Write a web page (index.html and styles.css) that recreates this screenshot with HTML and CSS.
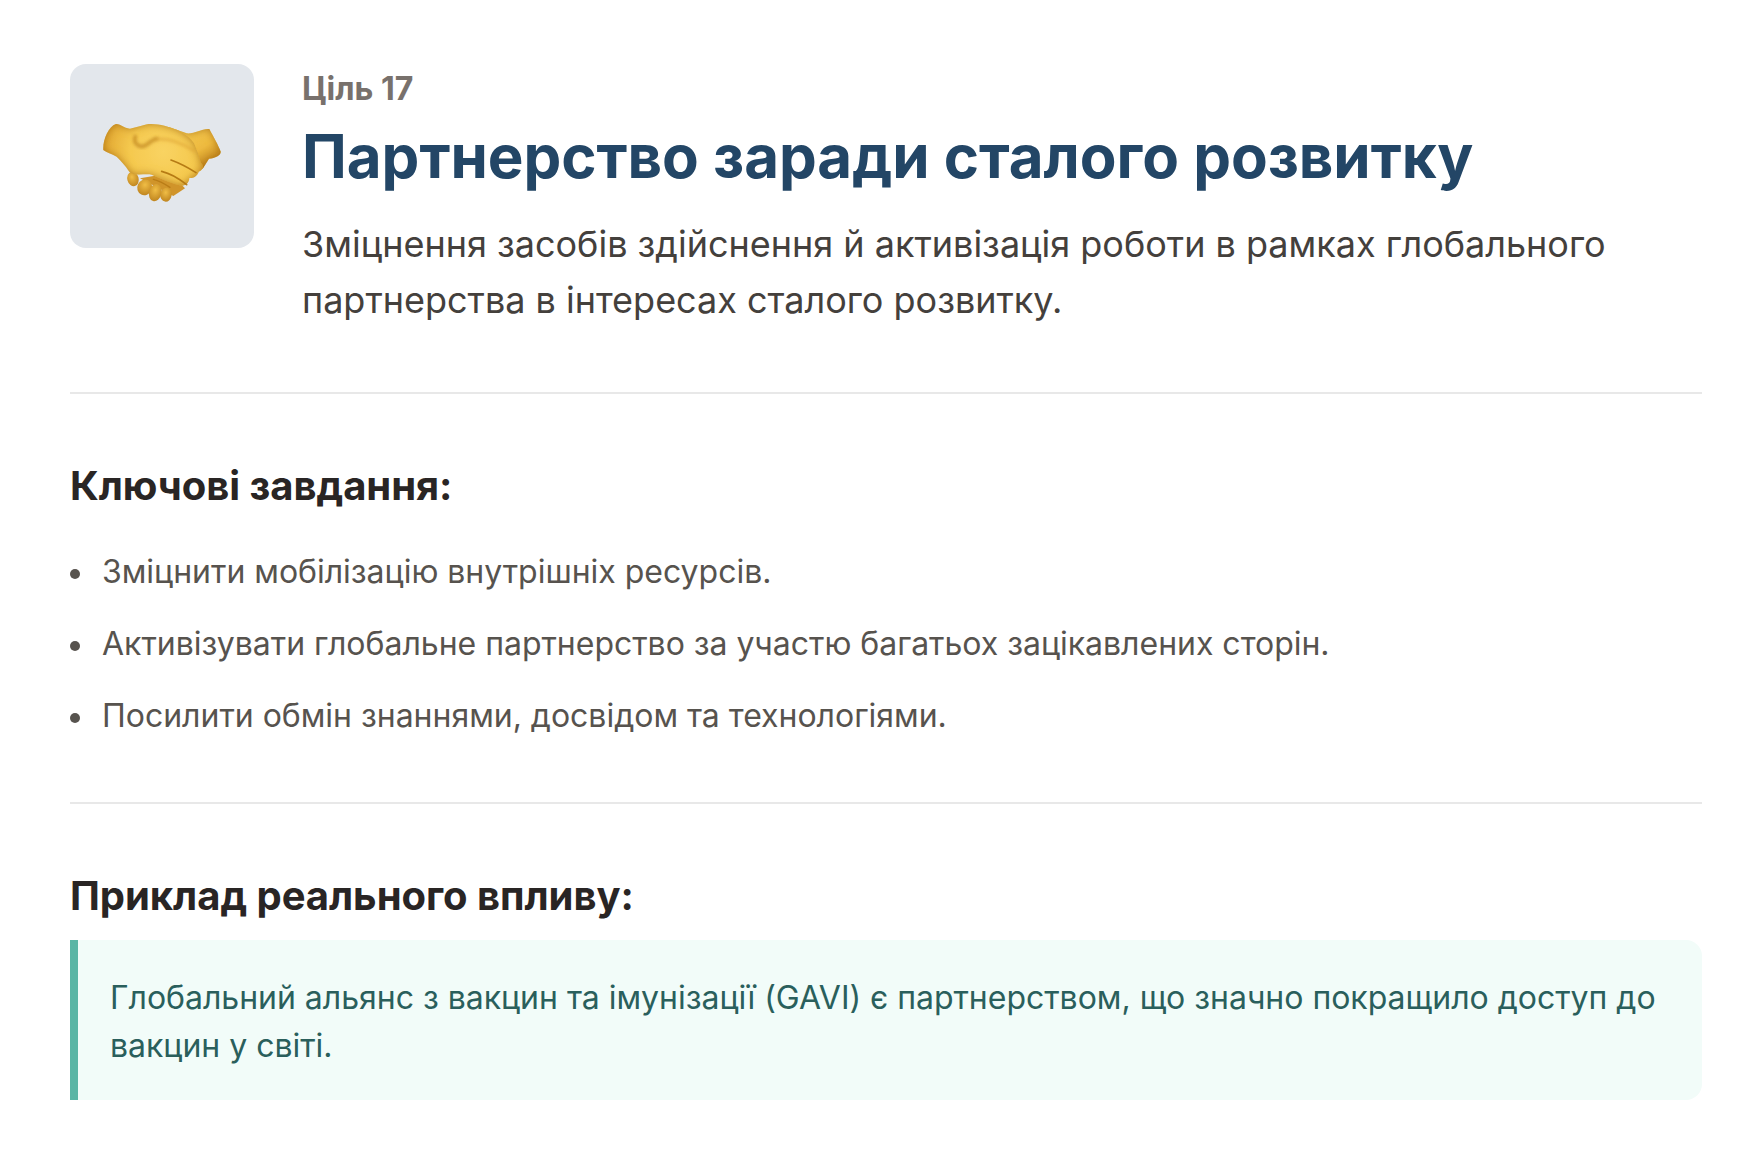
FILE: index.html
```html
<!DOCTYPE html>
<html lang="uk">
<head>
<meta charset="utf-8">
<title>Ціль 17</title>
<link rel="stylesheet" href="styles.css">
</head>
<body>
<main class="page">
  <header class="header">
    <div class="icon-box">
      <svg class="emoji" viewBox="0 0 435 300" aria-hidden="true">
        <defs>
          <radialGradient id="skin" gradientUnits="userSpaceOnUse" cx="220" cy="125" r="180">
            <stop offset="0" stop-color="#f9d362"/>
            <stop offset="0.55" stop-color="#f5c94f"/>
            <stop offset="1" stop-color="#e2a833"/>
          </radialGradient>
          <linearGradient id="arm" gradientUnits="userSpaceOnUse" x1="280" y1="50" x2="350" y2="170">
            <stop offset="0" stop-color="#f7cd55"/>
            <stop offset="0.6" stop-color="#edb93f"/>
            <stop offset="1" stop-color="#bf8420"/>
          </linearGradient>
          <radialGradient id="finger" cx="0.45" cy="0.35" r="0.7">
            <stop offset="0" stop-color="#f0bd45"/>
            <stop offset="1" stop-color="#bd821d"/>
          </radialGradient>
          <filter id="shade" x="-10%" y="-10%" width="120%" height="120%">
            <feGaussianBlur in="SourceAlpha" stdDeviation="13" result="blur"/>
            <feComposite in="SourceAlpha" in2="blur" operator="out" result="rim"/>
            <feFlood flood-color="#b0730f"/>
            <feComposite in2="rim" operator="in" result="rimcolor"/>
            <feMerge>
              <feMergeNode in="SourceGraphic"/>
              <feMergeNode in="rimcolor"/>
            </feMerge>
          </filter>
          <filter id="soft" x="-20%" y="-20%" width="140%" height="140%">
            <feGaussianBlur stdDeviation="2"/>
          </filter>
          <filter id="softer" x="-30%" y="-30%" width="160%" height="160%">
            <feGaussianBlur stdDeviation="5"/>
          </filter>
        </defs>
        <path fill="#d0942a" d="M150 205 L250 258 L285 235 L240 190Z"/>
        <ellipse cx="129" cy="207" rx="17" ry="22" fill="url(#finger)" transform="rotate(-15 129 207)"/>
        <ellipse cx="164" cy="232" rx="22" ry="24" fill="url(#finger)" transform="rotate(25 164 232)"/>
        <ellipse cx="196" cy="248" rx="19" ry="26" fill="url(#finger)" transform="rotate(15 196 248)"/>
        <ellipse cx="228" cy="254" rx="17" ry="21" fill="url(#finger)" transform="rotate(8 228 254)"/>
        <path fill="url(#arm)" filter="url(#shade)" d="M230 50 C250 55 270 62 290 70 C315 72 335 55 358 57 C370 80 385 105 392 125 C392 137 375 144 357 146 L338 176 L280 130 L230 90Z"/>
        <path fill="url(#skin)" filter="url(#shade)" d="M78 42 C95 42 100 55 120 56 L152 48 C185 34 225 46 262 60 C285 72 300 82 312 100 C322 125 330 145 332 157 C343 168 340 180 326 185 C322 198 310 205 298 204 C297 220 285 230 268 226 C240 218 205 203 185 194 C165 190 130 200 118 185 C105 165 95 155 80 140 C65 132 50 127 40 120 C38 90 55 50 78 42Z"/>
        <path fill="none" stroke="#bd821d" stroke-width="12" stroke-linecap="round" opacity="0.65" filter="url(#softer)" d="M136 80 C128 100 150 118 170 104 C180 96 188 88 200 86"/>
        <path fill="none" stroke="#dca033" stroke-width="9" stroke-linecap="round" opacity="0.55" filter="url(#softer)" d="M200 88 C228 84 270 96 312 122"/>
        <path fill="none" stroke="#b0730f" stroke-width="5" stroke-linecap="round" opacity="0.9" filter="url(#soft)" d="M243 150 C265 158 290 170 318 188"/>
        <path fill="none" stroke="#b0730f" stroke-width="5" stroke-linecap="round" opacity="0.9" filter="url(#soft)" d="M215 184 C240 190 265 204 290 224"/>
        <path fill="none" stroke="#b0730f" stroke-width="4" stroke-linecap="round" opacity="0.7" filter="url(#soft)" d="M190 208 C205 212 225 222 240 232"/>
      </svg>
    </div>
    <div class="intro">
      <p class="goal-number">Ціль 17</p>
      <h1 class="title">Партнерство заради сталого розвитку</h1>
      <p class="lead">Зміцнення засобів здійснення й активізація роботи в рамках глобального партнерства в інтересах сталого розвитку.</p>
    </div>
  </header>

  <section class="tasks">
    <h2 class="section-title">Ключові завдання:</h2>
    <ul class="task-list">
      <li class="task">Зміцнити мобілізацію внутрішніх ресурсів.</li>
      <li class="task">Активізувати глобальне партнерство за участю багатьох зацікавлених сторін.</li>
      <li class="task">Посилити обмін знаннями, досвідом та технологіями.</li>
    </ul>
  </section>

  <section class="impact">
    <h2 class="section-title">Приклад реального впливу:</h2>
    <div class="callout">Глобальний альянс з вакцин та імунізації (GAVI) є партнерством, що значно покращило доступ до вакцин у світі.</div>
  </section>
</main>
</body>
</html>
```
FILE: styles.css
```css
* { box-sizing: border-box; }
html, body { margin: 0; padding: 0; background: #fff; }
body { font-family: Inter, "Noto Sans", sans-serif; }
.page { width: 1764px; padding: 64px 62px 0 70px; }
.header { display: flex; gap: 48px; padding-bottom: 64px; border-bottom: 2px solid #e8e8e8; }
.icon-box { flex: none; width: 184px; height: 184px; border-radius: 16px; background: #e3e7ec; display: flex; align-items: center; justify-content: center; }
.emoji { width: 145px; height: 100px; display: block; margin-top: 8px; margin-left: 1px; }
.intro { flex: 1; min-width: 0; }
.goal-number { margin: 0 0 6px; font-size: 32px; line-height: 50px; font-weight: 700; color: #78716c; }
.title { margin: 0 0 24px; font-size: 60px; line-height: 72px; font-weight: 700; color: #234666; letter-spacing: -0.03px; }
.lead { margin: 0; font-size: 36px; line-height: 56px; color: #44403c; letter-spacing: -0.01px; }
.tasks { padding-top: 64px; padding-bottom: 38px; border-bottom: 2px solid #e8e8e8; }
.section-title { margin: 0; font-size: 40px; line-height: 56px; font-weight: 700; color: #292524; letter-spacing: -0.05px; }
.task-list { margin: 34px 0 0; padding: 0 0 0 32px; list-style: none; }
.task { position: relative; font-size: 32px; line-height: 48px; color: #57534e; margin-bottom: 24px; letter-spacing: -0.02px; }
.task::before { content: ""; position: absolute; left: -32px; top: 21px; width: 10px; height: 10px; border-radius: 50%; background: #57534e; }
.impact { padding-top: 64px; }
.callout { margin-top: 16px; border-left: 8px solid #5ab5a5; border-radius: 0 16px 16px 0; background: #f2fcf9; color: #2a5f5c; font-size: 32px; line-height: 48px; padding: 34px 32px 30px; letter-spacing: -0.02px; }
```
